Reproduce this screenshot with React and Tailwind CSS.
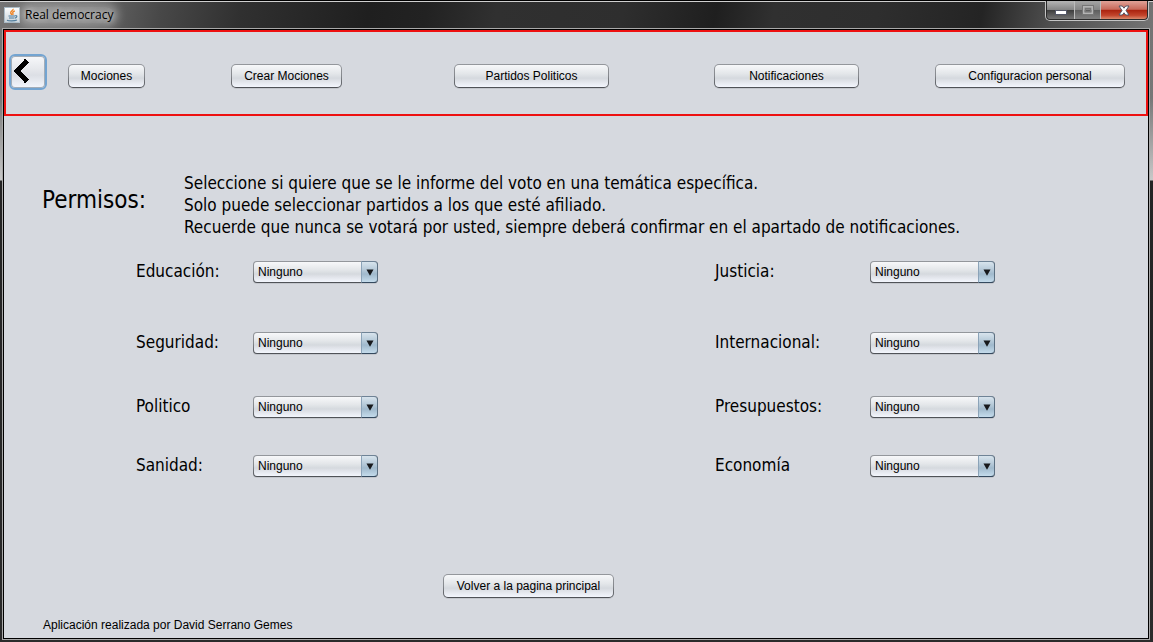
import React from "react";

const TOPICS = [
  ["Educación:", "Justicia:"],
  ["Seguridad:", "Internacional:"],
  ["Politico", "Presupuestos:"],
  ["Sanidad:", "Economía"],
];

const BUTTON =
  "h-6 rounded-[5px] border border-transparent text-center text-[12px] leading-[22px] text-black shadow-[0_1px_0_#c3c6cc] [background:linear-gradient(#f7f8fa,#e3e6e9_40%,#d5d9de_60%,#dfe2e8_72%,#f3f6fd)_padding-box,linear-gradient(#94979c,#85888d_50%,#4d5055)_border-box]";

function NimbusButton({ children, className }) {
  return (
    <button type="button" className={`${BUTTON} ${className}`}>
      {children}
    </button>
  );
}

function JavaIcon() {
  return (
    <svg width="16" height="16" viewBox="0 0 16 16" aria-hidden="true">
      <defs>
        <linearGradient id="tile" x1="0" y1="0" x2="0" y2="1">
          <stop offset="0" stopColor="#fdfdfd" />
          <stop offset="1" stopColor="#c9d3da" />
        </linearGradient>
      </defs>
      <rect x="0.5" y="0.5" width="15" height="15" fill="url(#tile)" stroke="#a9bac5" />
      <path d="M9 1.800c.8 1.500-2.900 2.400-2.300 4.200.2.700 1 1 1 1.900M10.800 4c-1.500.5-2.600 1.200-1.900 2.300.4.600.2 1-.3 1.500" fill="none" stroke="#ee8324" strokeWidth="1.400" />
      <path d="M4.500 9h6.500M5 11h5.500M11.200 8.800c2.200-.5 2.300 1.700-.2 2.300M3 13.200c1.600.9 7.800.9 10-.2" fill="none" stroke="#4d7b9b" strokeWidth="1.200" />
    </svg>
  );
}

function TitleBar() {
  return (
    <header className="flex h-7 items-start justify-between border-t border-black bg-[linear-gradient(100deg,#747474_0%,#686868_8%,#484848_14%,#303030_21%,#1f1f1f_32%,#222_37%,#303030_43%,#2e2e2e_54%,#1f1f1f_62%,#303030_67%,#2e2e2e_76%,#242424_85%,#4e4e4e_91%,#747474_100%)] shadow-[inset_0_1px_0_#cfcfcf]">
      <div className="flex items-center gap-1 pt-[6px] pl-1">
        <JavaIcon />
        <h1 className="rounded-full bg-white/25 px-[1px] font-['Open_Sans','Noto_Sans',sans-serif] text-[12px] leading-4 text-black shadow-[0_0_8px_5px_rgba(255,255,255,0.25)] [text-shadow:0_0_6px_#fff]">
          Real democracy
        </h1>
      </div>
      <div className="mr-1 flex h-5 rounded-b-[5px] border border-t-0 border-[#c4c4c4] bg-[#2a2a2a] p-px pt-0">
        <button type="button" aria-label="Minimizar" className="flex w-[27px] items-end justify-center rounded-bl-[3px] bg-[linear-gradient(#b5b5b5,#858585_48%,#3e3e3e_52%,#747474)] pb-[4px]">
          <svg width="12" height="5" viewBox="0 0 12 5"><rect x="0.500" y="0.500" width="11" height="4" fill="#fff" stroke="#545767" /></svg>
        </button>
        <button type="button" disabled aria-label="Maximizar" className="flex w-[27px] items-center justify-center border-x border-[#bcbcbc] bg-[linear-gradient(#a5a5a5,#858585_48%,#5e5e5e_52%,#818181)]">
          <svg width="12" height="10" viewBox="0 0 12 10" fill="none"><rect x="1.500" y="1.500" width="9" height="7" stroke="#b4b4b4" strokeWidth="2" /><rect x="0.500" y="0.500" width="11" height="9" stroke="#777" /><rect x="3.500" y="3.500" width="5" height="3" stroke="#777" /></svg>
        </button>
        <button type="button" aria-label="Cerrar" className="flex w-[46px] items-center justify-center rounded-br-[3px] bg-[linear-gradient(#e0a298,#c8695a_46%,#ab2410_52%,#c3452c_80%,#d98a6d)]">
          <svg width="12" height="11" viewBox="0 0 12 11"><path d="M1 1h3.300L6 3.200 7.700 1H11L8 5.500l3 4.500H7.700L6 7.800 4.300 10H1l3-4.500z" fill="#fff" stroke="#525465" /></svg>
        </button>
      </div>
    </header>
  );
}

function TopicField({ label, wide }) {
  const id = `topic-${label}`;
  return (
    <div className="flex items-start">
      <label htmlFor={id} className={`${wide ? "w-[155px]" : "w-[117px]"} shrink-0 font-['DejaVu_Sans_Condensed','Noto_Sans',sans-serif] text-[17px] leading-5`}>
        {label}
      </label>
      <div className="relative h-[22px] w-[125px]">
        <select
          id={id}
          className="block h-full w-full appearance-none rounded-[4px] border border-transparent pl-1 text-[12px] leading-5 text-black shadow-[0_1px_0_#c3c6cc] [background:linear-gradient(#f7f8fa,#e3e6e9_40%,#d5d9de_60%,#dfe2e8_72%,#f3f6fd)_padding-box,linear-gradient(#94979c,#85888d_50%,#4d5055)_border-box]"
        >
          <option>Ninguno</option>
        </select>
        <span className="pointer-events-none absolute inset-y-0 right-0 flex w-[17px] items-center justify-center rounded-r-[4px] border border-l-[#8ba3b8] border-t-[#6f8396] border-r-[#5c7082] border-b-[#34495e] bg-[linear-gradient(#d8e4ed,#b0c5d5_45%,#a0b9cc_60%,#c5dcec)]">
          <svg width="8" height="7" viewBox="0 0 8 7" aria-hidden="true"><path d="M0.500 0.500h7L4 6.800z" fill="#17191c" /></svg>
        </span>
      </div>
    </div>
  );
}

export default function App() {
  return (
    <div className="flex min-h-screen flex-col bg-[#262626] font-['Liberation_Sans',sans-serif] text-black">
      <TitleBar />
      <div className="flex grow bg-[linear-gradient(#747474,#777_70px,#c8c8c8_152px,#242424_153px,#2b2b2b)] px-[2px] pr-[3px] pb-[2px]">
        <div className="flex grow border border-[#a9a9a9]">
          <div className="flex grow flex-col border border-black bg-[#d6d9df]">
            <nav className="flex h-[86px] items-center border-2 border-[#ee1111] pr-[21px] pl-[3px] pt-[6px]">
              <button
                type="button"
                aria-label="Atrás"
                className="mr-[21px] mb-[9px] flex h-9 w-[38px] shrink-0 items-center rounded-[6px] border-2 border-[#73a4d1] bg-[linear-gradient(#f7f8fa,#e6e8ec_40%,#dcdfe5_60%,#e3e6ec_72%,#f3f6fd)] pb-[2px] pl-[2px] shadow-[inset_0_0_0_1px_#a3adb8]"
              >
                <svg width="16" height="26" viewBox="0 0 16 26" shapeRendering="crispEdges" aria-hidden="true"><path d="M14 2.500 4 13 14 23.500" fill="none" stroke="#000" strokeWidth="5" /></svg>
              </button>
              <div className="grid grow grid-cols-[163fr_223fr_260fr_221fr_190fr]">
                <NimbusButton className="w-[77px]">Mociones</NimbusButton>
                <NimbusButton className="w-[111px]">Crear Mociones</NimbusButton>
                <NimbusButton className="w-[155px]">Partidos Politicos</NimbusButton>
                <NimbusButton className="w-[145px]">Notificaciones</NimbusButton>
                <NimbusButton className="w-full">Configuracion personal</NimbusButton>
              </div>
            </nav>

            <main className="flex grow flex-col pt-14">
              <section className="flex pl-[38px] font-['DejaVu_Sans_Condensed','Noto_Sans',sans-serif]">
                <h2 className="w-[142px] shrink-0 pt-3 text-[24px] leading-8">Permisos:</h2>
                <p className="text-[17px] leading-[22px]">
                  Seleccione si quiere que se le informe del voto en una temática específica.
                  <br />
                  Solo puede seleccionar partidos a los que esté afiliado.
                  <br />
                  Recuerde que nunca se votará por usted, siempre deberá confirmar en el apartado de notificaciones.
                </p>
              </section>

              <form className="mt-[23px] grid grid-cols-[579fr_433fr] grid-rows-[71px_64px_59px_22px] pl-[132px]">
                {TOPICS.map(([left, right]) => (
                  <React.Fragment key={left}>
                    <TopicField label={left} />
                    <TopicField label={right} wide />
                  </React.Fragment>
                ))}
              </form>

              <div className="mt-auto pb-[19px] pl-[439px]">
                <NimbusButton className="w-[171px]">Volver a la pagina principal</NimbusButton>
              </div>
            </main>
            <footer className="pb-[5px] pl-[39px] text-[12px] leading-4">
              Aplicación realizada por David Serrano Gemes
            </footer>
          </div>
        </div>
      </div>
    </div>
  );
}
